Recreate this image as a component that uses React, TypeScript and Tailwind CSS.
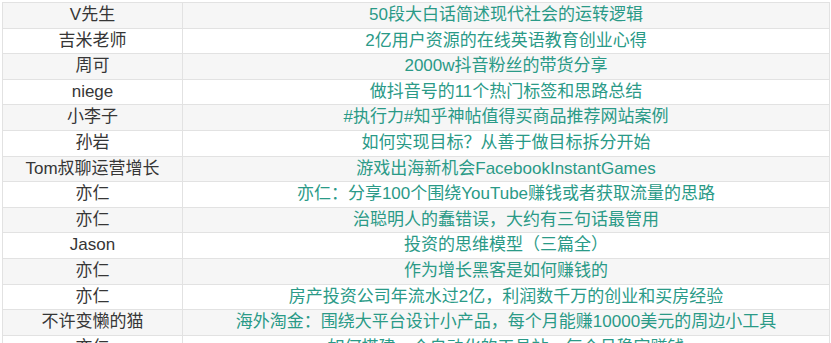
const rows: [string, string][] = [
  ["V先生", "50段大白话简述现代社会的运转逻辑"],
  ["吉米老师", "2亿用户资源的在线英语教育创业心得"],
  ["周可", "2000w抖音粉丝的带货分享"],
  ["niege", "做抖音号的11个热门标签和思路总结"],
  ["小李子", "#执行力#知乎神帖值得买商品推荐网站案例"],
  ["孙岩", "如何实现目标？从善于做目标拆分开始"],
  ["Tom叔聊运营增长", "游戏出海新机会FacebookInstantGames"],
  ["亦仁", "亦仁：分享100个围绕YouTube赚钱或者获取流量的思路"],
  ["亦仁", "治聪明人的蠢错误，大约有三句话最管用"],
  ["Jason", "投资的思维模型（三篇全）"],
  ["亦仁", "作为增长黑客是如何赚钱的"],
  ["亦仁", "房产投资公司年流水过2亿，利润数千万的创业和买房经验"],
  ["不许变懒的猫", "海外淘金：围绕大平台设计小产品，每个月能赚10000美元的周边小工具"],
  ["亦仁", "如何搭建一个自动化的工具站，每个月稳定赚钱"],
];

export default function App() {
  return (
    <div
      className="h-[343px] w-[831px] overflow-hidden bg-white pl-[2px] pr-[1px] pt-[2px]"
      style={{ fontFamily: '"Liberation Sans", "Noto Sans CJK SC", sans-serif' }}
    >
      <div className="border-l border-r border-t border-[#e2e2e2]">
        {rows.map(([author, title], i) => (
          <div
            key={i}
            className={`flex h-[25.6px] border-b border-[#e2e2e2] text-[17px] leading-[24px] ${
              i % 2 === 0 ? "bg-[#f6f6f6]" : "bg-white"
            }`}
          >
            <div className="w-[180px] shrink-0 border-r border-[#e2e2e2] text-center text-[#363636]">
              {author}
            </div>
            <div className="flex-1 whitespace-nowrap text-center text-[#2a9a87]">{title}</div>
          </div>
        ))}
      </div>
    </div>
  );
}
